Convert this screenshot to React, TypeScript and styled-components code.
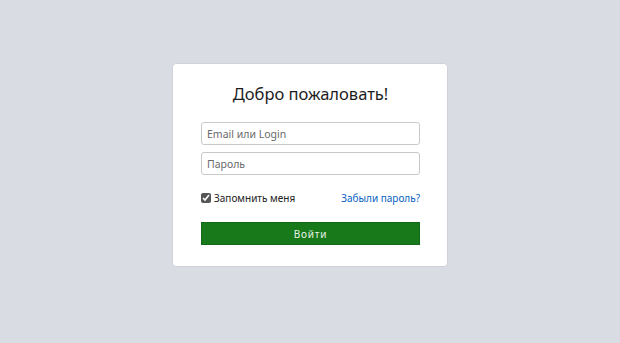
import * as React from "react";
import styled, { createGlobalStyle } from "styled-components";

const GlobalStyle = createGlobalStyle`
  html, body {
    margin: 0;
    padding: 0;
    background: #d9dce3;
    font-family: "Noto Sans", "Open Sans", sans-serif;
  }
`;

const Page = styled.div`
  display: flex;
  align-items: flex-start;
  justify-content: center;
  padding-top: 63px;
  min-height: 343px;
  box-sizing: border-box;
`;

const Card = styled.form`
  width: 276px;
  box-sizing: border-box;
  background: #fff;
  border: 1px solid #cfd2d9;
  border-radius: 4px;
  padding: 18px 27px 21px 28px;
  display: flex;
  flex-direction: column;
`;

const Title = styled.h1`
  margin: 0 0 16px;
  font-size: 16.5px;
  line-height: 24px;
  font-weight: normal;
  text-align: center;
  color: #1d1d1d;
`;

const Input = styled.input`
  height: 23px;
  box-sizing: border-box;
  border: 1px solid #c9c9c9;
  border-radius: 3px;
  padding: 0 5px;
  margin-bottom: 7px;
  font-family: "Noto Sans", "Open Sans", sans-serif;
  font-size: 10.5px;
  color: #333;
  outline: none;
  &::placeholder {
    color: #6a6a6a;
  }
`;

const OptionsRow = styled.div`
  display: flex;
  align-items: center;
  justify-content: space-between;
  margin: 9px 0 17px;
  font-size: 10px;
  line-height: 14px;
`;

const Remember = styled.label`
  display: flex;
  align-items: center;
  gap: 3px;
  color: #222;
`;

const Check = styled.input`
  margin: 0;
  width: 10px;
  height: 10px;
  accent-color: #555;
`;

const ForgotLink = styled.a`
  color: #0b62c4;
  text-decoration: none;
`;

const SubmitButton = styled.button`
  height: 23px;
  border: 1px solid #12691a;
  background: #18791a;
  color: #e8f2e8;
  font-family: "Noto Sans", "Open Sans", sans-serif;
  font-size: 10px;
  letter-spacing: 0.8px;
  cursor: pointer;
`;

export default function App() {
  return (
    <>
      <GlobalStyle />
      <Page>
        <Card onSubmit={e => e.preventDefault()}>
          <Title>Добро пожаловать!</Title>
          <Input type="text" placeholder="Email или Login" />
          <Input type="password" placeholder="Пароль" />
          <OptionsRow>
            <Remember>
              <Check type="checkbox" defaultChecked />
              Запомнить меня
            </Remember>
            <ForgotLink href="#">Забыли пароль?</ForgotLink>
          </OptionsRow>
          <SubmitButton type="submit">Войти</SubmitButton>
        </Card>
      </Page>
    </>
  );
}
